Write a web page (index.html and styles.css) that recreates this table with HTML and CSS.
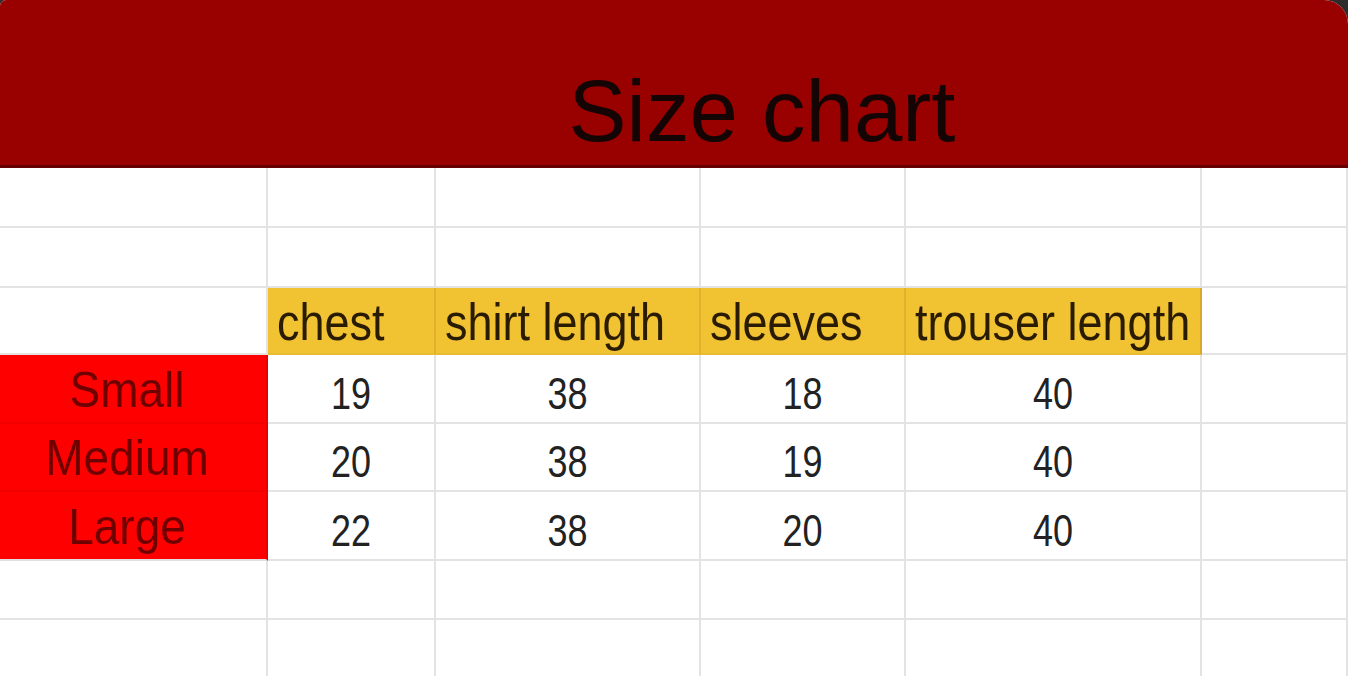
FILE: index.html
```html
<!DOCTYPE html>
<html>
<head>
<meta charset="utf-8">
<title>Size chart</title>
<link rel="stylesheet" href="styles.css">
</head>
<body>
<div class="page">
  <header class="banner"><h1 class="title">Size chart</h1></header>
  <div class="sheet">
    <div class="cell"></div><div class="cell"></div><div class="cell"></div><div class="cell"></div><div class="cell"></div><div class="cell"></div>
    <div class="cell"></div><div class="cell"></div><div class="cell"></div><div class="cell"></div><div class="cell"></div><div class="cell"></div>

    <div class="cell"></div>
    <div class="cell hd"><span>chest</span></div>
    <div class="cell hd"><span>shirt length</span></div>
    <div class="cell hd"><span>sleeves</span></div>
    <div class="cell hd hd-last"><span>trouser length</span></div>
    <div class="cell"></div>

    <div class="cell lbl"><span>Small</span></div>
    <div class="cell num"><span>19</span></div>
    <div class="cell num"><span>38</span></div>
    <div class="cell num"><span>18</span></div>
    <div class="cell num"><span>40</span></div>
    <div class="cell"></div>

    <div class="cell lbl"><span>Medium</span></div>
    <div class="cell num"><span>20</span></div>
    <div class="cell num"><span>38</span></div>
    <div class="cell num"><span>19</span></div>
    <div class="cell num"><span>40</span></div>
    <div class="cell"></div>

    <div class="cell lbl lbl-last"><span>Large</span></div>
    <div class="cell num"><span>22</span></div>
    <div class="cell num"><span>38</span></div>
    <div class="cell num"><span>20</span></div>
    <div class="cell num"><span>40</span></div>
    <div class="cell"></div>

    <div class="cell"></div><div class="cell"></div><div class="cell"></div><div class="cell"></div><div class="cell"></div><div class="cell"></div>
    <div class="cell"></div><div class="cell"></div><div class="cell"></div><div class="cell"></div><div class="cell"></div><div class="cell"></div>
  </div>
</div>
</body>
</html>
```

FILE: styles.css
```css
* { box-sizing: border-box; }

html, body {
  margin: 0;
  padding: 0;
  background: #2c2c2c;
}

body {
  font-family: "Liberation Sans", Arial, sans-serif;
}

.page {
  width: 1348px;
  height: 676px;
  background: #ffffff;
  border-radius: 6px 24px 0 0;
  overflow: hidden;
  display: flex;
  flex-direction: column;
}

.banner {
  height: 168px;
  flex: none;
  background: #990000;
  border-bottom: 3px solid #660000;
  display: flex;
  justify-content: center;
  padding-left: 176px;
}

.title {
  margin: 0;
  padding-top: 61px;
  font-size: 87px;
  line-height: 100px;
  font-weight: normal;
  color: #140404;
  letter-spacing: 0;
}

.sheet {
  flex: none;
  display: grid;
  grid-template-columns: 268px 168px 265px 205px 296px 1fr;
  grid-template-rows: 60px 60px 67px 69px 68px 69px 59px 80px;
}

.cell {
  border-right: 2px solid #e3e3e3;
  border-bottom: 2px solid #e3e3e3;
  display: flex;
  align-items: center;
  min-width: 0;
}

.cell span {
  display: inline-block;
  white-space: nowrap;
}

.hd {
  background: #f1c232;
  border-right-color: #e2b02a;
  border-bottom-color: #e9bc34;
  padding-left: 9px;
  padding-top: 5px;
  font-size: 45px;
  color: #2a1c02;
}

.hd-last {
  border-right-color: #d8a928;
}

.hd span {
  transform: scaleY(1.16);
}

.lbl {
  background: #ff0000;
  border-right-color: #e80000;
  border-bottom-color: #f20000;
  justify-content: center;
  padding-right: 12px;
  font-size: 46px;
  color: #6e0000;
}

.lbl-last {
  border-bottom-color: #e0e0e0;
}

.lbl span {
  transform: scaleY(1.1);
}

.num {
  justify-content: center;
  padding-top: 10px;
  font-size: 36px;
  color: #222222;
}

.num span {
  transform: scaleY(1.22);
}
```
